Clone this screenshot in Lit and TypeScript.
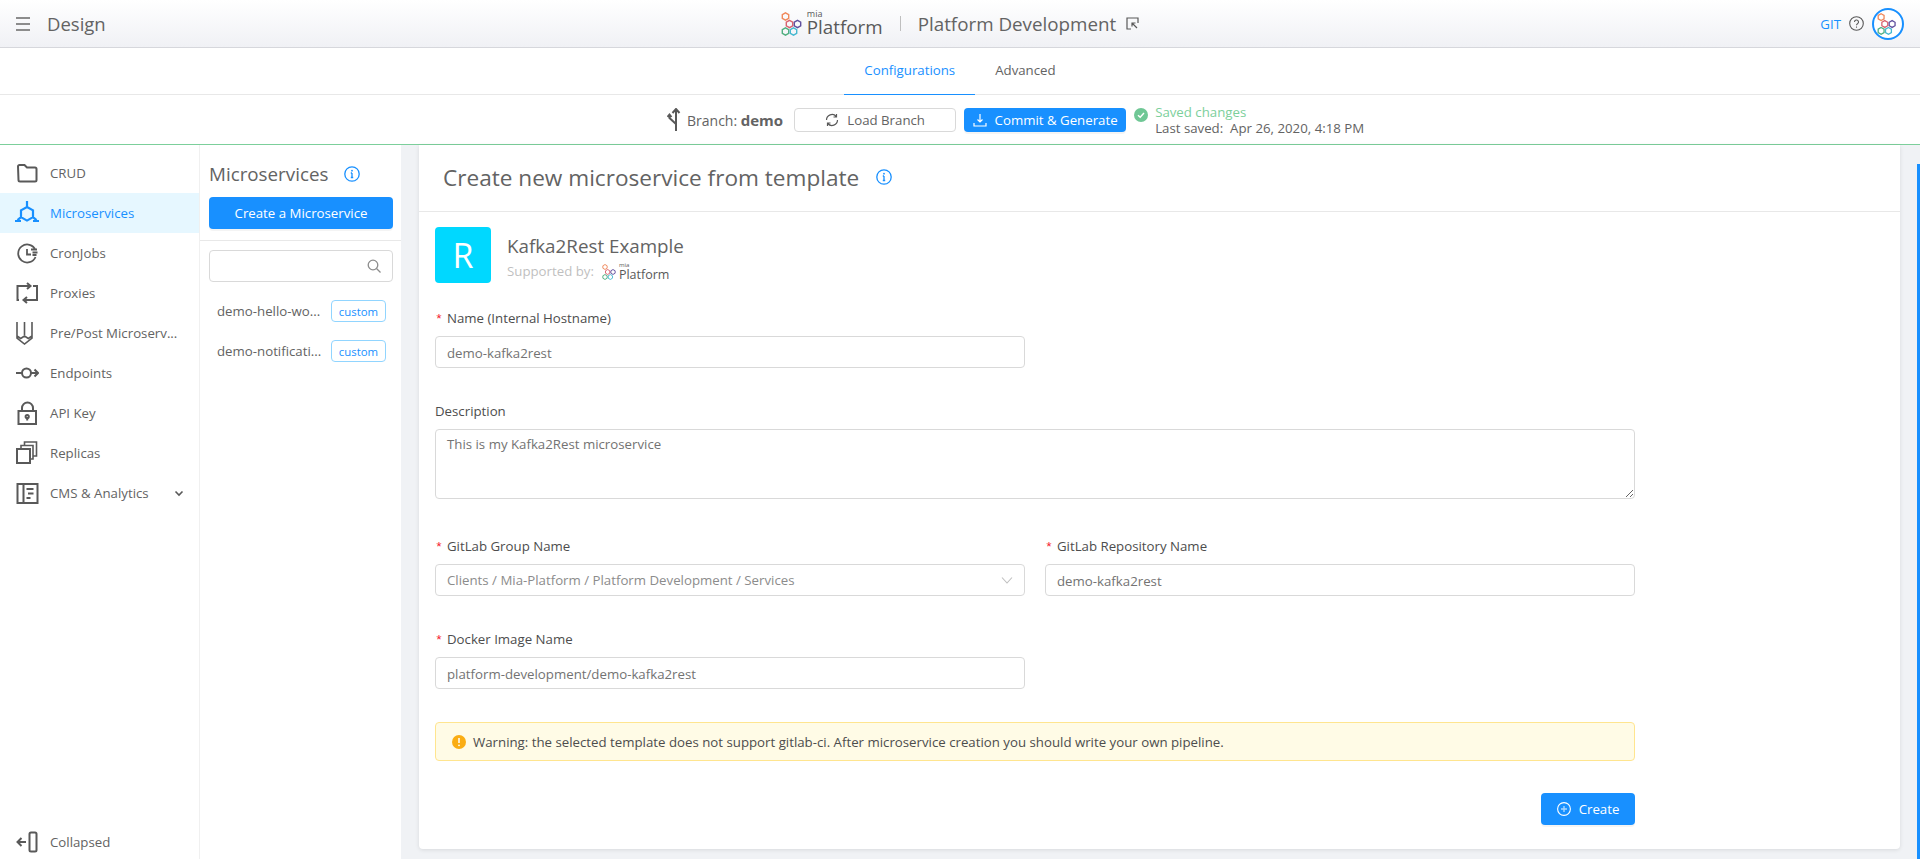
import { LitElement, html, svg, css } from "lit";
import { customElement } from "lit/decorators.js";

const hexPath = (cx: number, cy: number, r: number) => {
  const h = r * 0.866;
  return `M${cx} ${cy - r}L${cx + h} ${cy - r / 2}V${cy + r / 2}L${cx} ${cy + r}L${cx - h} ${cy + r / 2}V${cy - r / 2}Z`;
};

const hexes: [number, number, string][] = [
  [4.5, 4.5, "#f0885a"],
  [8.5, 12, "#d9606e"],
  [16.5, 12, "#5f4f9e"],
  [4.5, 19.5, "#4fae7f"],
  [12.5, 19.5, "#45b8d0"],
];

const miaMark = (size: number) => html`<svg width=${size} height=${size} viewBox="0 0 24 24" fill="none">
  ${hexes.map(([x, y, c]) => svg`<path d=${hexPath(x, y, 3.700)} stroke=${c} stroke-width="1.400" />`)}
</svg>`;

const navIcons: Record<string, unknown> = {
  folder: svg`<path d="M3 5.500a1.500 1.500 0 0 1 1.500-1.500h5l2.500 2.500h8a1.500 1.500 0 0 1 1.500 1.500v11a1.500 1.500 0 0 1-1.500 1.500h-15a1.500 1.500 0 0 1-1.500-1.500z" />`,
  hex: svg`<path d="M12 0v6M12 6l6 3.400v6.800l-6 3.400-6-3.400V9.400zM6 16.200l-3.500 3M0 20h6M18 16.200l3.500 3M24 20h-6" stroke="#1890ff" stroke-width="2.200" />`,
  clock: svg`<path d="M20.500 9a9 9 0 1 0 0 7M12 8v5.500h4M16 8.500h6M17.500 11.500h5M17.500 14h4" stroke-width="1.800" />`,
  proxy: svg`<path d="M4 19H2.500V5H15M12 2l3.500 3L12 8M18 5h4v14H9M12 16l-3.500 3L12 22" />`,
  pencil: svg`<path d="M2 1v13M9.500 1v13M17 1v13M2 14v3l7.500 6 7.500-6v-3M2 15l3.700 2.500 3.800-2.500 3.800 2.500 3.700-2.500" stroke-width="1.600" />`,
  endpoint: svg`<path d="M1 12h6.500M16 12h7M19.500 8.500 23 12l-3.500 3.500" /><circle cx="11.500" cy="12" r="4.500" />`,
  lock: svg`<rect x="3.500" y="10" width="17.500" height="13" /><path d="M7 10V7a5.500 5.500 0 0 1 11 0v3" /><circle cx="12.200" cy="15.500" r="1.600" /><path d="M12.200 17v2.500" />`,
  replicas: svg`<rect x="2" y="8" width="13" height="14" /><path d="M6 8V4.500h12V18h-3M9.500 4.500V1h12v14h-3.500" stroke-width="1.600" />`,
  cms: svg`<rect x="2.500" y="3" width="20" height="19" /><path d="M8.500 3v19M11.500 8h7M13 12.500h5.500M11.500 17h4" />`,
  collapse: svg`<path d="M11 12H2.500M6.500 8l-4 4 4 4" /><rect x="14.500" y="2.500" width="7" height="19" rx="1.500" />`,
};

const navItems = [
  { icon: "folder", label: "CRUD" },
  { icon: "hex", label: "Microservices", active: true },
  { icon: "clock", label: "CronJobs" },
  { icon: "proxy", label: "Proxies" },
  { icon: "pencil", label: "Pre/Post Microserv..." },
  { icon: "endpoint", label: "Endpoints" },
  { icon: "lock", label: "API Key" },
  { icon: "replicas", label: "Replicas" },
  { icon: "cms", label: "CMS & Analytics", chevron: true },
];

const services = ["demo-hello-wo...", "demo-notificati..."];

const navIcon = (name: string) => html`<svg class="nav-icon" width="24" height="24" viewBox="0 0 24 24" fill="none" stroke="#595959" stroke-width="2">${navIcons[name]}</svg>`;

const infoIcon = () => html`<svg width="16" height="16" viewBox="0 0 16 16" fill="none">
  <circle cx="8" cy="8" r="7.200" stroke="#1890ff" stroke-width="1.300" />
  <path d="M8 7v4.500M6.800 7H8M6.800 11.500h2.400" stroke="#1890ff" stroke-width="1.300" />
  <circle cx="8" cy="4.700" r="0.900" fill="#1890ff" />
</svg>`;

@customElement("app-root")
export class AppRoot extends LitElement {
  static styles = css`
    :host {
      display: block;
      height: 100vh;
      overflow: hidden;
      font-family: "Open Sans", sans-serif;
      font-size: 13.250px;
      color: #636363;
      background: #fff;
    }

    .shell {
      display: flex;
      flex-direction: column;
      height: 100%;
    }

    .topbar {
      height: 47px;
      flex: none;
      display: grid;
      grid-template-columns: 1fr auto 1fr;
      align-items: center;
      background: linear-gradient(#fff, #f0f1f5);
      border-bottom: 1px solid #d6d7dc;
    }

    .topbar-left {
      display: flex;
      align-items: center;
      gap: 17px;
      padding-left: 16px;
      font-size: 18.500px;
    }

    .burger {
      width: 14px;
      height: 10px;
      border-top: 2px solid #8c8c8c;
      border-bottom: 2px solid #8c8c8c;
      position: relative;
    }

    .burger::after {
      content: "";
      position: absolute;
      left: 0;
      right: 0;
      top: 4px;
      height: 2px;
      background: #8c8c8c;
    }

    .brand {
      display: flex;
      align-items: center;
    }

    .logo {
      display: flex;
      align-items: center;
      gap: 2px;
      color: #595959;
    }

    .logo-text {
      display: flex;
      flex-direction: column;
    }

    .logo-mia {
      font-size: 9px;
      line-height: 8px;
    }

    .logo-name {
      font-size: 18.800px;
      line-height: 19px;
    }

    .brand-divider {
      width: 1px;
      height: 15px;
      background: #bfbfbf;
      margin: 0 17px;
    }

    .project {
      font-size: 18.800px;
    }

    .project-link {
      margin-left: 10px;
      display: block;
    }

    .topbar-right {
      display: flex;
      align-items: center;
      justify-content: flex-end;
      padding-right: 16px;
      gap: 8px;
    }

    .git {
      color: #1890ff;
    }

    .avatar {
      width: 32px;
      height: 32px;
      box-sizing: border-box;
      border: 2px solid #1890ff;
      border-radius: 50%;
      display: flex;
      align-items: center;
      justify-content: center;
      background: #fff;
    }

    .tabs {
      height: 46px;
      flex: none;
      display: flex;
      justify-content: center;
      border-bottom: 1px solid #e8e8e8;
    }

    .tab {
      padding: 0 20px 3px;
      display: flex;
      align-items: center;
      margin-bottom: -1px;
      box-sizing: border-box;
    }

    .tab.active {
      color: #1890ff;
      border-bottom: 1px solid #1890ff;
    }

    .branchbar {
      height: 49px;
      flex: none;
      display: flex;
      align-items: center;
      padding-left: 667px;
      border-bottom: 1px solid #7ccf9b;
    }

    .branch-label {
      margin-left: 4px;
      margin-right: 11px;
      white-space: nowrap;
      font-size: 14px;
    }

    .branch-label b {
      font-size: 15px;
    }

    .btn {
      height: 24px;
      width: 162px;
      box-sizing: border-box;
      border-radius: 4px;
      display: flex;
      align-items: center;
      justify-content: center;
      gap: 8px;
      white-space: nowrap;
    }

    .btn-default {
      background: #fff;
      border: 1px solid #d9d9d9;
    }

    .btn-primary {
      background: #1890ff;
      color: #fff;
      box-shadow: 0 2px 0 rgba(0, 0, 0, 0.045);
    }

    .load {
      margin-right: 8px;
    }

    .saved {
      display: flex;
      align-items: flex-start;
      margin-left: 8px;
      gap: 7px;
      line-height: 16px;
    }

    .saved-check {
      margin-top: 4px;
    }

    .saved-title {
      color: #7ccf9b;
    }

    .body {
      flex: 1;
      min-height: 0;
      display: flex;
    }

    .sidebar {
      width: 200px;
      flex: none;
      display: flex;
      flex-direction: column;
      padding-top: 8px;
      box-sizing: border-box;
      border-right: 1px solid #f0f0f0;
    }

    .nav-item {
      height: 40px;
      box-sizing: border-box;
      padding-bottom: 1px;
      display: flex;
      align-items: center;
      padding-left: 15px;
      gap: 11px;
      white-space: nowrap;
    }

    .nav-item.active {
      background: #e6f7ff;
      color: #1890ff;
    }

    .nav-chevron {
      margin-left: auto;
      margin-right: 15px;
    }

    .nav-footer {
      margin-top: auto;
      height: 34px;
    }

    .services {
      width: 201px;
      flex: none;
      box-sizing: border-box;
    }

    .services-head {
      padding: 16px 8px 0 9px;
      height: 96px;
      box-sizing: border-box;
      border-bottom: 1px solid #e8e8e8;
    }

    .services-title {
      display: flex;
      align-items: center;
      gap: 16px;
      font-size: 18.800px;
      line-height: 26px;
      margin: 0 0 10px;
      font-weight: 400;
    }

    .services-create {
      width: 184px;
      height: 32px;
    }

    .search {
      margin: 9px 8px 0 9px;
      height: 32px;
      box-sizing: border-box;
      border: 1px solid #d9d9d9;
      border-radius: 4px;
      display: flex;
      align-items: center;
      justify-content: flex-end;
      padding-right: 11px;
    }

    .service-list {
      margin-top: 9px;
    }

    .service {
      height: 40px;
      display: flex;
      align-items: center;
      justify-content: space-between;
      padding: 0 15px 0 17px;
      white-space: nowrap;
    }

    .tag {
      width: 55px;
      height: 22px;
      box-sizing: border-box;
      border: 1px solid #91d5ff;
      border-radius: 4px;
      color: #1890ff;
      font-size: 11.400px;
      display: flex;
      align-items: center;
      justify-content: center;
    }

    .content {
      flex: 1;
      min-width: 0;
      display: flex;
      background: #f0f2f5;
      padding: 0 0 10px 18px;
    }

    .card {
      flex: 1;
      min-width: 0;
      background: #fff;
      border-radius: 0 0 4px 4px;
      box-shadow: 0 1px 4px rgba(0, 0, 0, 0.1);
    }

    .rail {
      width: 20px;
      flex: none;
      margin-bottom: -10px;
      padding: 19px 0 0 17px;
      box-sizing: border-box;
      display: flex;
    }

    .rail-bar {
      width: 3px;
      background: #1890ff;
    }

    .card-head {
      height: 67px;
      box-sizing: border-box;
      border-bottom: 1px solid #e8e8e8;
      display: flex;
      align-items: center;
      padding: 0 0 2px 24px;
      gap: 17px;
    }

    .card-title {
      margin: 0;
      font-size: 22.600px;
      font-weight: 400;
    }

    .form {
      width: 1200px;
      margin-left: 16px;
    }

    .template {
      display: flex;
      gap: 16px;
      margin-top: 15px;
    }

    .template-logo {
      width: 56px;
      height: 56px;
      border-radius: 4px;
      background: #00d8ff;
      color: #fff;
      font-size: 34px;
      font-weight: 500;
      display: flex;
      align-items: center;
      justify-content: center;
    }

    .template-name {
      font-size: 18.800px;
      line-height: 24px;
      margin-top: 7px;
    }

    .template-support {
      display: flex;
      align-items: center;
      color: #bfbfbf;
      line-height: 20px;
      gap: 8px;
      margin-top: 3px;
    }

    .template-support .logo {
      gap: 1px;
      margin-top: 2px;
    }

    .template-support .logo-mia {
      font-size: 6px;
      line-height: 5px;
    }

    .template-support .logo-name {
      font-size: 12.500px;
      line-height: 13px;
    }

    .label {
      line-height: 22px;
      margin-bottom: 7px;
      white-space: nowrap;
      color: #4d4d4d;
    }

    .label.required::before {
      content: "*";
      color: #f5222d;
      margin-right: 4px;
      font-family: "Liberation Mono", monospace;
      line-height: 0;
    }

    .control {
      display: block;
      width: 100%;
      height: 32px;
      box-sizing: border-box;
      border: 1px solid #d9d9d9;
      border-radius: 4px;
      padding: 1px 11px 0;
      font: inherit;
      color: #737373;
      background: #fff;
      outline: none;
    }

    textarea.control {
      height: 70px;
      padding: 5px 11px;
    }

    .select {
      display: flex;
      align-items: center;
      justify-content: space-between;
      padding-top: 0;
      color: #8c8c8c;
    }

    .field-name {
      margin-top: 24px;
      width: 590px;
    }

    .field-desc {
      margin-top: 32px;
    }

    .row-git {
      margin-top: 36px;
      display: grid;
      grid-template-columns: 1fr 1fr;
      gap: 20px;
    }

    .row-docker {
      margin-top: 32px;
      width: 590px;
    }

    .alert {
      margin-top: 33px;
      height: 39px;
      box-sizing: border-box;
      background: #fffbe6;
      border: 1px solid #ffe58f;
      border-radius: 4px;
      display: flex;
      align-items: center;
      padding-left: 16px;
      gap: 7px;
      color: #4d4d4d;
    }

    .actions {
      margin-top: 32px;
      display: flex;
      justify-content: flex-end;
    }

    .create {
      width: 94px;
      height: 32px;
    }
  `;

  private logo(markSize: number) {
    return html`<div class="logo">
      ${miaMark(markSize)}
      <div class="logo-text">
        <span class="logo-mia">mia</span>
        <span class="logo-name">Platform</span>
      </div>
    </div>`;
  }

  private field(label: string, value: string) {
    return html`<div>
      <div class="label required">${label}</div>
      <input class="control" .value=${value} value=${value} />
    </div>`;
  }

  render() {
    return html`<div class="shell">
      <header class="topbar">
        <div class="topbar-left">
          <div class="burger"></div>
          <span>Design</span>
        </div>
        <div class="brand">
          ${this.logo(24)}
          <div class="brand-divider"></div>
          <span class="project">Platform Development</span>
          <svg class="project-link" width="13" height="13" viewBox="0 0 13 13" fill="none" stroke="#595959" stroke-width="1.200">
            <path d="M5 12H1V1h11v5M6 6l5 5M6 9.500V6h3.500" />
          </svg>
        </div>
        <div class="topbar-right">
          <span class="git">GIT</span>
          <svg width="15" height="15" viewBox="0 0 15 15" fill="none" stroke="#595959" stroke-width="1.100">
            <circle cx="7.500" cy="7.500" r="6.800" />
            <path d="M5.500 6a2 2 0 1 1 3 1.700c-.7.400-1 .8-1 1.600" />
            <path d="M7.500 10.500v1.200" />
          </svg>
          <div class="avatar">${miaMark(22)}</div>
        </div>
      </header>

      <nav class="tabs">
        <div class="tab active">Configurations</div>
        <div class="tab">Advanced</div>
      </nav>

      <div class="branchbar">
        <svg width="16" height="24" viewBox="0 0 16 24" fill="none" stroke="#595959" stroke-width="2">
          <path d="M9 23V1M5.500 5 9 1l3.500 4M9 16 2.500 10V7M.5 9l2-2.500 2 2.500" />
        </svg>
        <span class="branch-label">Branch: <b>demo</b></span>
        <div class="btn btn-default load">
          <svg width="14" height="14" viewBox="0 0 14 14" fill="none" stroke="#595959" stroke-width="1.200">
            <path d="M1.500 7a5.500 5.500 0 0 1 9.700-3.500M12.500 7a5.500 5.500 0 0 1-9.700 3.500M11.500 1v3h-3M2.500 13v-3h3" />
          </svg>
          <span>Load Branch</span>
        </div>
        <div class="btn btn-primary">
          <svg width="14" height="14" viewBox="0 0 14 14" fill="none" stroke="#fff" stroke-width="1.200">
            <path d="M7 1v8M4.500 6.500 7 9l2.500-2.500M1 10v3h12v-3" />
          </svg>
          <span>Commit &amp; Generate</span>
        </div>
        <div class="saved">
          <svg class="saved-check" width="14" height="14" viewBox="0 0 14 14" fill="none">
            <circle cx="7" cy="7" r="7" fill="#6fc795" />
            <path d="M4 7.200 6.200 9.300 10 5" stroke="#fff" stroke-width="1.400" />
          </svg>
          <div>
            <div class="saved-title">Saved changes</div>
            <div>Last saved:&nbsp; Apr 26, 2020, 4:18 PM</div>
          </div>
        </div>
      </div>

      <div class="body">
        <aside class="sidebar">
          ${navItems.map(
            (item) => html`<div class="nav-item ${item.active ? "active" : ""}">
              ${navIcon(item.icon)}
              <span>${item.label}</span>
              ${item.chevron
                ? html`<svg class="nav-chevron" width="10" height="10" viewBox="0 0 10 10" fill="none" stroke="#595959" stroke-width="1.600"><path d="M1.500 3.500 5 7l3.500-3.500" /></svg>`
                : ""}
            </div>`
          )}
          <div class="nav-item nav-footer">${navIcon("collapse")}<span>Collapsed</span></div>
        </aside>

        <section class="services">
          <div class="services-head">
            <h2 class="services-title">Microservices ${infoIcon()}</h2>
            <div class="btn btn-primary services-create">Create a Microservice</div>
          </div>
          <div class="search">
            <svg width="14" height="14" viewBox="0 0 14 14" fill="none" stroke="#8c8c8c" stroke-width="1.300">
              <circle cx="6" cy="6" r="4.800" />
              <path d="M9.500 9.500 13.500 13.500" />
            </svg>
          </div>
          <div class="service-list">
            ${services.map((name) => html`<div class="service"><span>${name}</span><span class="tag">custom</span></div>`)}
          </div>
        </section>

        <main class="content">
          <div class="card">
            <div class="card-head">
              <h1 class="card-title">Create new microservice from template</h1>
              ${infoIcon()}
            </div>
            <div class="form">
              <div class="template">
                <div class="template-logo">R</div>
                <div>
                  <div class="template-name">Kafka2Rest Example</div>
                  <div class="template-support">
                    <span>Supported by:</span>
                    ${this.logo(16)}
                  </div>
                </div>
              </div>

              <div class="field-name">${this.field("Name (Internal Hostname)", "demo-kafka2rest")}</div>

              <div class="field-desc">
                <div class="label">Description</div>
                <textarea class="control">This is my Kafka2Rest microservice</textarea>
              </div>

              <div class="row-git">
                <div>
                  <div class="label required">GitLab Group Name</div>
                  <div class="control select">
                    <span>Clients / Mia-Platform / Platform Development / Services</span>
                    <svg width="12" height="12" viewBox="0 0 12 12" fill="none" stroke="#bfbfbf" stroke-width="1.100"><path d="M1 3.500 6 9l5-5.500" /></svg>
                  </div>
                </div>
                ${this.field("GitLab Repository Name", "demo-kafka2rest")}
              </div>

              <div class="row-docker">${this.field("Docker Image Name", "platform-development/demo-kafka2rest")}</div>

              <div class="alert">
                <svg width="14" height="14" viewBox="0 0 14 14">
                  <circle cx="7" cy="7" r="7" fill="#faad14" />
                  <path d="M7 3v5" stroke="#fff" stroke-width="1.500" />
                  <circle cx="7" cy="10.300" r="0.900" fill="#fff" />
                </svg>
                <span>Warning: the selected template does not support gitlab-ci. After microservice creation you should write your own pipeline.</span>
              </div>

              <div class="actions">
                <div class="btn btn-primary create">
                  <svg width="14" height="14" viewBox="0 0 14 14" fill="none" stroke="#fff" stroke-width="1.100">
                    <circle cx="7" cy="7" r="6.400" />
                    <path d="M7 4v6M4 7h6" stroke="#a9d6ff" stroke-width="1.400" />
                  </svg>
                  <span>Create</span>
                </div>
              </div>
            </div>
          </div>
          <div class="rail"><div class="rail-bar"></div></div>
        </main>
      </div>
    </div>`;
  }
}
